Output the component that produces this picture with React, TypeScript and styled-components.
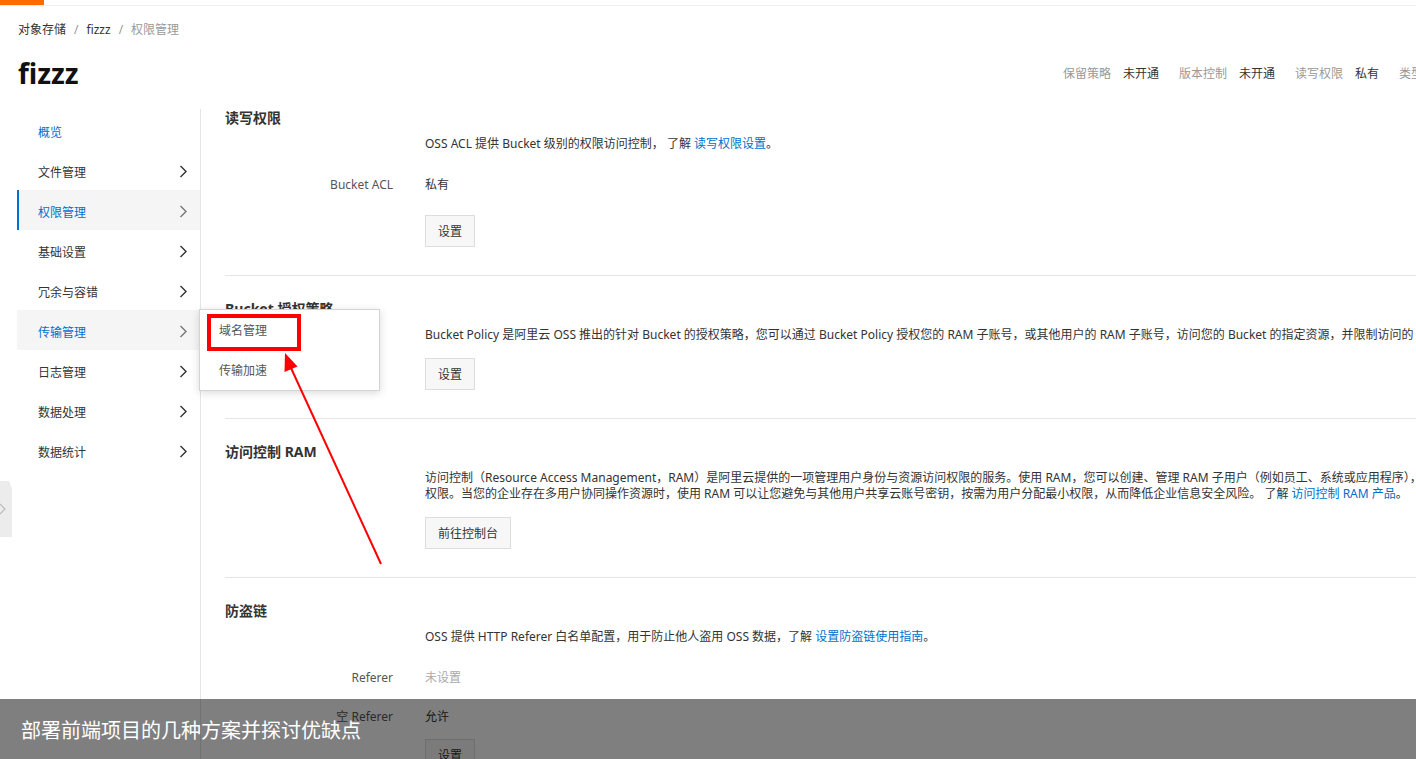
import styled, { createGlobalStyle } from 'styled-components'

const GlobalStyle = createGlobalStyle`
  * {
    box-sizing: border-box;
  }
  html, body {
    margin: 0;
    padding: 0;
    overflow: hidden;
    background: #fff;
  }
  body {
    font-family: "Noto Sans", "Noto Sans CJK SC", sans-serif;
    font-size: 12px;
    color: #333;
  }
`

const Page = styled.div`
  position: relative;
  width: 1501px;
  height: 759px;
  overflow: hidden;
  display: flex;
  flex-direction: column;
`

const TopBar = styled.div`
  height: 6px;
  border-bottom: 1px solid #eee;
`

const Progress = styled.div`
  width: 44px;
  height: 5px;
  background: #ff6a00;
`

const Header = styled.div`
  padding: 0 18px;
`

const Breadcrumb = styled.div`
  display: flex;
  margin-top: 14px;
  line-height: 20px;
`

const Crumb = styled.span<{ $current?: boolean }>`
  color: ${p => (p.$current ? '#999' : '#333')};
`

const Sep = styled.span`
  margin: 0 8px;
  color: #999;
`

const TitleRow = styled.div`
  display: flex;
  align-items: center;
  justify-content: space-between;
  margin-top: 16px;
  height: 34px;
`

const Title = styled.h1`
  margin: 0;
  font-size: 28px;
  font-weight: 700;
  line-height: 34px;
  color: #111;
`

const Info = styled.div`
  display: flex;
  gap: 20px;
`

const InfoItem = styled.div`
  display: flex;
  gap: 12px;
`

const InfoLabel = styled.span`
  color: #999;
`

const InfoValue = styled.span`
  color: #333;
`

const Body = styled.div`
  flex: 1;
  display: flex;
  margin-top: 19px;
  padding-left: 17px;
`

const Sidebar = styled.nav`
  width: 184px;
  flex-shrink: 0;
  padding-top: 1px;
  border-right: 1px solid #e5e5e5;
`

const NavItem = styled.div<{ $active?: boolean; $hover?: boolean; $blue?: boolean }>`
  height: 40px;
  display: flex;
  align-items: center;
  justify-content: space-between;
  padding: 3px 13px 0 19px;
  border-left: 2px solid ${p => (p.$active ? '#0070cc' : 'transparent')};
  background: ${p => (p.$active || p.$hover ? '#f5f5f5' : 'transparent')};
  color: ${p => (p.$active || p.$hover || p.$blue ? '#0070cc' : '#333')};
  font-size: 12px;
`

const Chevron = styled.svg<{ $muted?: boolean }>`
  width: 8px;
  height: 13px;
  color: ${p => (p.$muted ? '#777' : '#333')};
`

const Content = styled.main`
  flex: 1;
  padding: 0 18px 0 24px;
`

const Section = styled.section`
  padding: 24px 0 28px;
  border-bottom: 1px solid #e5e5e5;
  &:first-child {
    padding-top: 0;
  }
`

const SectionTitle = styled.h3`
  margin: 0 0 10px;
  padding-top: 1px;
  font-size: 14px;
  font-weight: 700;
  line-height: 16px;
  color: #333;
`

const Field = styled.div<{ $mb?: number }>`
  display: grid;
  grid-template-columns: 168px 1fr;
  column-gap: 32px;
  margin-bottom: ${p => p.$mb ?? 15}px;
  &:last-child {
    margin-bottom: 0;
  }
`

const FieldLabel = styled.div`
  text-align: right;
  padding-top: 4px;
  line-height: 28px;
  color: #555;
`

const FieldValue = styled.div<{ $muted?: boolean }>`
  grid-column: 2;
  padding-top: 4px;
  line-height: 28px;
  color: ${p => (p.$muted ? '#aaa' : '#333')};
`

const Desc = styled.div`
  grid-column: 2;
  line-height: 16px;
  white-space: nowrap;
  color: #333;
`

const Link = styled.a`
  color: #0070cc;
  text-decoration: none;
`

const Button = styled.button`
  grid-column: 2;
  justify-self: start;
  height: 32px;
  padding: 0 12px;
  border: 1px solid #ddd;
  background: #f7f7f7;
  color: #333;
  font: inherit;
  font-size: 12px;
  border-radius: 0;
`

const Dropdown = styled.div`
  position: absolute;
  left: 199px;
  top: 309px;
  width: 181px;
  background: #fff;
  border: 1px solid #d4d4d4;
  box-shadow: 0 2px 8px rgba(0, 0, 0, 0.15);
  z-index: 5;
`

const MenuItem = styled.div`
  height: 40px;
  padding-top: 2px;
  line-height: 38px;
  padding-left: 19px;
  color: #555;
`

const Highlight = styled.div`
  position: absolute;
  left: 7px;
  top: 4px;
  width: 94px;
  height: 37px;
  border: 4px solid #ff0000;
`

const Annotation = styled.svg`
  position: absolute;
  left: 0;
  top: 0;
  width: 1501px;
  height: 759px;
  pointer-events: none;
  z-index: 6;
`

const CollapseHandle = styled.div`
  position: absolute;
  left: 0;
  top: 481px;
  width: 12px;
  height: 56px;
  display: flex;
  align-items: center;
  background: #ececec;
  clip-path: polygon(0 0, 75% 0, 100% 14%, 100% 100%, 0 100%);
  color: #bbb;
`

const Caption = styled.div`
  position: absolute;
  left: 0;
  right: 0;
  bottom: 0;
  height: 60px;
  display: flex;
  align-items: center;
  padding-left: 21px;
  background: rgba(0, 0, 0, 0.5);
  color: #fff;
  font-size: 20px;
  z-index: 7;
`

const navItems = ['文件管理', '权限管理', '基础设置', '冗余与容错', '传输管理', '日志管理', '数据处理', '数据统计']

const ArrowRight = ({ muted }: { muted?: boolean }) => (
  <Chevron $muted={muted} viewBox="0 0 8 13">
    <polyline points="1.5,1 7,6.5 1.5,12" fill="none" stroke="currentColor" strokeWidth="1.4" />
  </Chevron>
)

const App = () => {
  return (
    <>
      <GlobalStyle />
      <Page>
        <TopBar>
          <Progress />
        </TopBar>
        <Header>
          <Breadcrumb>
            <Crumb>对象存储</Crumb>
            <Sep>/</Sep>
            <Crumb>fizzz</Crumb>
            <Sep>/</Sep>
            <Crumb $current>权限管理</Crumb>
          </Breadcrumb>
          <TitleRow>
            <Title>fizzz</Title>
            <Info>
              <InfoItem>
                <InfoLabel>保留策略</InfoLabel>
                <InfoValue>未开通</InfoValue>
              </InfoItem>
              <InfoItem>
                <InfoLabel>版本控制</InfoLabel>
                <InfoValue>未开通</InfoValue>
              </InfoItem>
              <InfoItem>
                <InfoLabel>读写权限</InfoLabel>
                <InfoValue>私有</InfoValue>
              </InfoItem>
              <InfoItem>
                <InfoLabel>类型</InfoLabel>
                <InfoValue>标准存储</InfoValue>
              </InfoItem>
            </Info>
          </TitleRow>
        </Header>

        <Body>
          <Sidebar>
            <NavItem $blue>概览</NavItem>
            {navItems.map(name => (
              <NavItem key={name} $active={name === '权限管理'} $hover={name === '传输管理'}>
                {name}
                <ArrowRight muted={name === '权限管理' || name === '传输管理'} />
              </NavItem>
            ))}
          </Sidebar>

          <Content>
            <Section>
              <SectionTitle>读写权限</SectionTitle>
              <Field>
                <Desc>
                  OSS ACL 提供 Bucket 级别的权限访问控制， 了解 <Link>读写权限设置</Link>。
                </Desc>
              </Field>
              <Field $mb={16}>
                <FieldLabel>Bucket ACL</FieldLabel>
                <FieldValue>私有</FieldValue>
              </Field>
              <Field>
                <Button>设置</Button>
              </Field>
            </Section>

            <Section>
              <SectionTitle>Bucket 授权策略</SectionTitle>
              <Field>
                <Desc>
                  Bucket Policy 是阿里云 OSS 推出的针对 Bucket 的授权策略，您可以通过 Bucket Policy 授权您的 RAM 子账号，或其他用户的 RAM 子账号，访问您的 Bucket 的指定资源，并限制访问的 IP、时间等条件。
                </Desc>
              </Field>
              <Field>
                <Button>设置</Button>
              </Field>
            </Section>

            <Section>
              <SectionTitle>访问控制 RAM</SectionTitle>
              <Field>
                <Desc>
                  访问控制（Resource Access Management，RAM）是阿里云提供的一项管理用户身份与资源访问权限的服务。使用 RAM，您可以创建、管理 RAM 子用户（例如员工、系统或应用程序），并可以控制这些 RAM 子用户对资源的操作
                  <br />
                  权限。当您的企业存在多用户协同操作资源时，使用 RAM 可以让您避免与其他用户共享云账号密钥，按需为用户分配最小权限，从而降低企业信息安全风险。 了解 <Link>访问控制 RAM 产品</Link>。
                </Desc>
              </Field>
              <Field>
                <Button>前往控制台</Button>
              </Field>
            </Section>

            <Section>
              <SectionTitle>防盗链</SectionTitle>
              <Field>
                <Desc>
                  OSS 提供 HTTP Referer 白名单配置，用于防止他人盗用 OSS 数据，了解 <Link>设置防盗链使用指南</Link>。
                </Desc>
              </Field>
              <Field $mb={7}>
                <FieldLabel>Referer</FieldLabel>
                <FieldValue $muted>未设置</FieldValue>
              </Field>
              <Field $mb={8}>
                <FieldLabel>空 Referer</FieldLabel>
                <FieldValue>允许</FieldValue>
              </Field>
              <Field>
                <Button>设置</Button>
              </Field>
            </Section>
          </Content>
        </Body>

        <Dropdown>
          <MenuItem>域名管理</MenuItem>
          <MenuItem>传输加速</MenuItem>
          <Highlight />
        </Dropdown>

        <Annotation viewBox="0 0 1501 759">
          <line x1="381" y1="564" x2="291" y2="368" stroke="#ff0000" strokeWidth="2" />
          <polygon points="285,353 297.5,366.5 284.5,372" fill="#ff0000" />
        </Annotation>

        <CollapseHandle>
          <svg width="7" height="12" viewBox="0 0 7 12">
            <polyline points="0,1 5,6 0,11" fill="none" stroke="currentColor" strokeWidth="1.2" />
          </svg>
        </CollapseHandle>

        <Caption>部署前端项目的几种方案并探讨优缺点</Caption>
      </Page>
    </>
  )
}

export default App
